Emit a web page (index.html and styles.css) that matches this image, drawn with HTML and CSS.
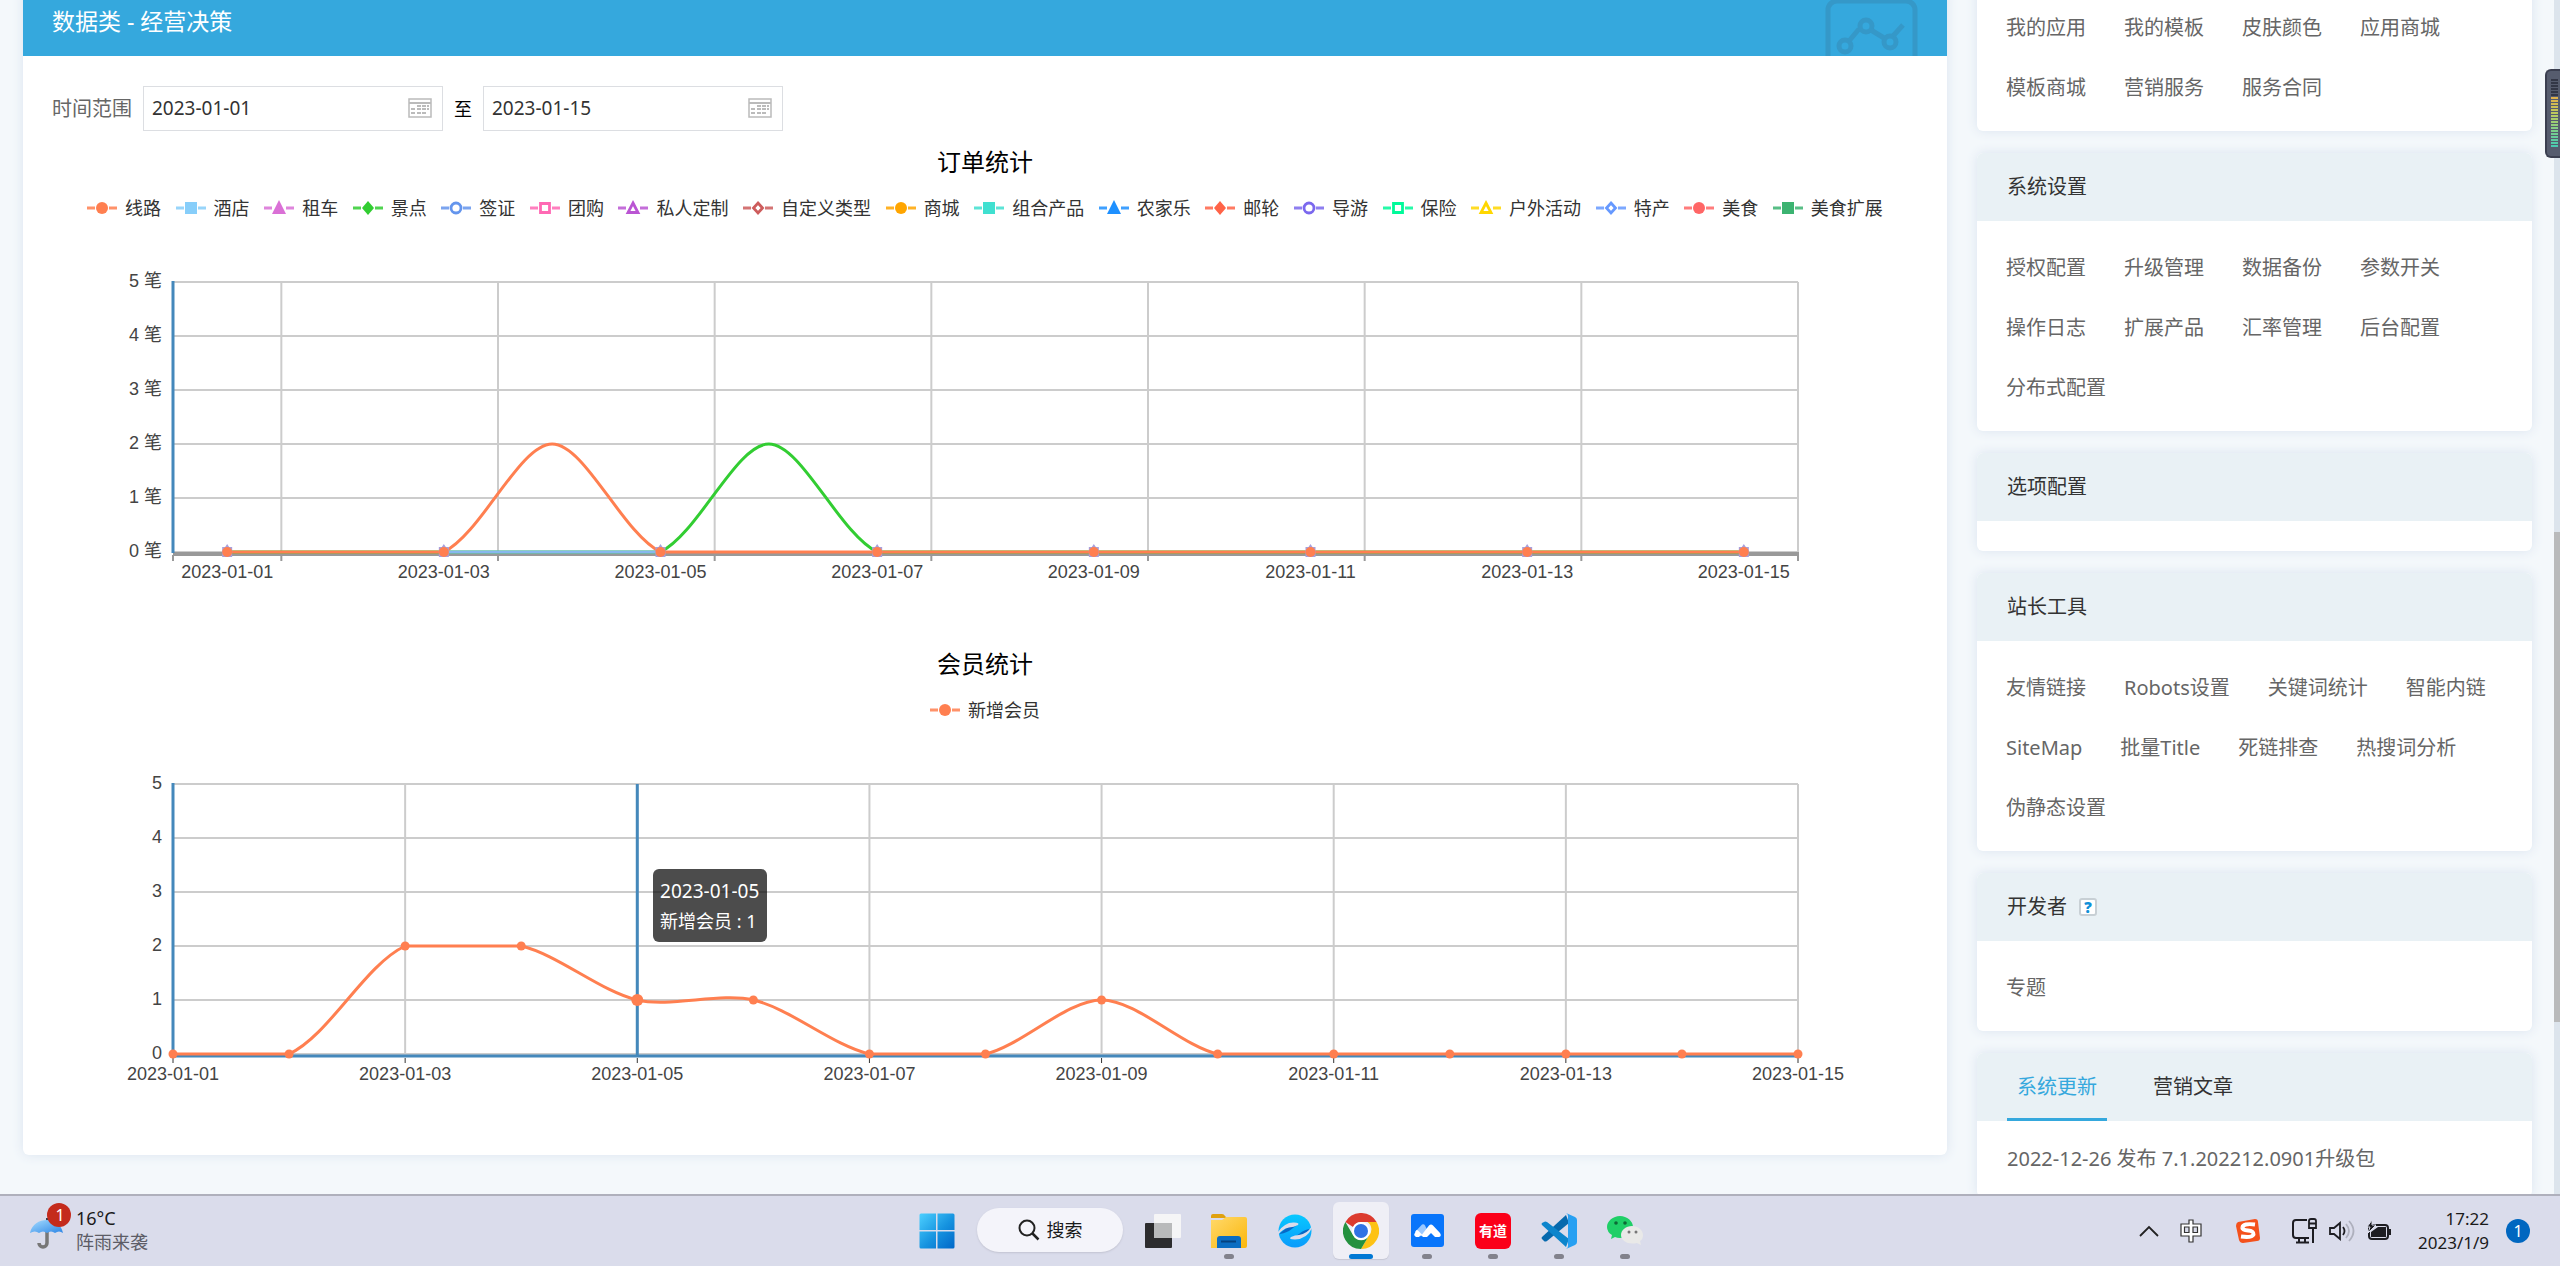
FILE: index.html
```html
<!DOCTYPE html>
<html lang="zh-CN">
<head>
<meta charset="utf-8">
<title>数据类 - 经营决策</title>
<link rel="stylesheet" href="styles.css">
</head>
<body>
<div class="viewport">
  <div class="page">
    <main class="panel">
      <header class="panel-head">
        <h1>数据类 - 经营决策</h1>
        <svg class="head-icon" width="94" height="68" viewBox="0 0 94 68" fill="none" stroke="#3598c8" stroke-width="5">
          <rect x="3" y="13" width="87" height="75" rx="9"/>
          <circle cx="20" cy="58" r="6"/><circle cx="41" cy="38" r="6"/><circle cx="65" cy="54" r="6"/>
          <path d="M24 53 34 41M46 42 59 50M68 48 78 37"/>
        </svg>
      </header>
      <form class="range">
        <label for="from">时间范围</label>
        <span class="date"><input id="from" type="text" value="2023-01-01"><svg width="24" height="20" viewBox="0 0 24 20"><use href="#cal"/></svg></span>
        <label class="to" for="until">至</label>
        <span class="date"><input id="until" type="text" value="2023-01-15"><svg width="24" height="20" viewBox="0 0 24 20"><use href="#cal"/></svg></span>
      </form>
      <figure class="chart" id="orders">
        <figcaption>订单统计</figcaption>
        <ul class="legend wide"></ul>
        <div class="plot"></div>
      </figure>
      <figure class="chart" id="members">
        <figcaption>会员统计</figcaption>
        <ul class="legend"></ul>
        <div class="plot"></div>
      </figure>
    </main>

    <aside class="side">
      <section class="card">
        <nav class="links"><a href="#">我的应用</a><a href="#">我的模板</a><a href="#">皮肤颜色</a><a href="#">应用商城</a><a href="#">模板商城</a><a href="#">营销服务</a><a href="#">服务合同</a></nav>
      </section>
      <section class="card">
        <h2>系统设置</h2>
        <nav class="links"><a href="#">授权配置</a><a href="#">升级管理</a><a href="#">数据备份</a><a href="#">参数开关</a><a href="#">操作日志</a><a href="#">扩展产品</a><a href="#">汇率管理</a><a href="#">后台配置</a><a href="#">分布式配置</a></nav>
      </section>
      <section class="card">
        <h2>选项配置</h2>
        <nav class="links"></nav>
      </section>
      <section class="card">
        <h2>站长工具</h2>
        <nav class="links"><a href="#">友情链接</a><a href="#">Robots设置</a><a href="#">关键词统计</a><a href="#">智能内链</a><a href="#">SiteMap</a><a href="#">批量Title</a><a href="#">死链排查</a><a href="#">热搜词分析</a><a href="#">伪静态设置</a></nav>
      </section>
      <section class="card">
        <h2>开发者 <button class="help" type="button">?</button></h2>
        <nav class="links"><a href="#">专题</a></nav>
      </section>
      <section class="card">
        <div class="tabs"><button type="button" class="on">系统更新</button><button type="button">营销文章</button></div>
        <nav class="links news"><a href="#">2022-12-26 发布 7.1.202212.0901升级包</a></nav>
      </section>
    </aside>
  </div>
  <div class="scroll"><div class="thumb"></div></div>
  <div class="meter"><i class="dim"></i><i class="lit"></i></div>
</div>

<footer class="taskbar">
  <div class="weather">
    <svg width="44" height="50" viewBox="0 0 44 50">
      <defs><linearGradient id="um" x2="1" y2="1"><stop stop-color="#a5dcff"/><stop offset="1" stop-color="#2d86e6"/></linearGradient></defs>
      <path d="M18 28V40a4 4 0 0 1-8 0" fill="none" stroke="#777" stroke-width="3.5"/>
      <path d="M18 15v3" stroke="#345" stroke-width="2"/>
      <path d="M1 30C3 21 10 17 18 17s14 4 16 13q-4-3-8 0-4-3-8 0-4-3-8 0-4-3-9 0Z" fill="url(#um)"/>
      <circle cx="30" cy="12" r="12" fill="#c42b1c"/>
      <text x="31" y="18" text-anchor="middle" class="badge-num">1</text>
    </svg>
    <div><b>16°C</b><span>阵雨来袭</span></div>
  </div>
  <div class="apps">
    <button type="button" class="app" aria-label="开始"><svg width="36" height="36" viewBox="0 0 36 36">
      <defs><linearGradient id="wg" x2="1" y2="1"><stop stop-color="#4cd0ff"/><stop offset=".55" stop-color="#1592df"/><stop offset="1" stop-color="#0067c8"/></linearGradient></defs>
      <path fill="url(#wg)" d="M2 .5h15v16.500H.5V2A1.500 1.500 0 0 1 2 .5ZM18.500.5H34A1.500 1.500 0 0 1 35.500 2v15h-17ZM.5 18.500H17v17H2A1.500 1.500 0 0 1 .5 34ZM18.500 18.500h17V34a1.500 1.500 0 0 1-1.500 1.500H18.500Z"/></svg></button>
    <button type="button" class="search"><svg width="22" height="22" viewBox="0 0 22 22" fill="none" stroke="#222" stroke-width="2"><circle cx="9" cy="9" r="7.500"/><path d="m14.500 14.500 6 6" stroke-width="2.500"/></svg>搜索</button>
    <button type="button" class="app" aria-label="任务视图"><svg width="36" height="34" viewBox="0 0 36 34"><rect y="9" width="27" height="25" rx="1" fill="#2c2c2e"/><rect x="9" width="27" height="24" rx="1" fill="#f5f5f6"/><path fill="#b9babb" d="M9 9h18v15H9z"/></svg></button>
    <button type="button" class="app run" aria-label="文件资源管理器"><svg width="36" height="34" viewBox="0 0 36 34"><defs><linearGradient id="fg" x2="1" y2="1"><stop stop-color="#ffd96b"/><stop offset="1" stop-color="#fbb70c"/></linearGradient></defs><path fill="#e0a10e" d="M0 2a2 2 0 0 1 2-2h9q2 0 3 2l2 2H0Z"/><path d="M0 6h11l4-3h19a2 2 0 0 1 2 2v27a2 2 0 0 1-2 2H0Z" fill="url(#fg)"/><path fill="#0b6dc2" d="M6 34V25q0-3 3-3h18q3 0 3 3v9Z"/><path stroke="#05427f" stroke-width="2" d="M10 27.500h15"/></svg></button>
    <button type="button" class="app" aria-label="浏览器"><svg width="34" height="34" viewBox="0 0 34 34"><defs><linearGradient id="eg" x2="0" y2="1"><stop stop-color="#08c8ff"/><stop offset="1" stop-color="#0a9bfb"/></linearGradient></defs><circle cx="17" cy="17" r="16.500" fill="url(#eg)"/><path fill="#0868c6" d="M1 20q4 0 10-3l8-6q-9-1-13 5ZM33 15q-6 0-12 5l-6 4q9 0 14-4Z"/><path fill="#dadceb" d="M0 18Q7 8 16 8.500q6 0 4 2.500-4 2-9 2.500Q4 15 0 21ZM34 14q-5 11-17 11.500-7 0-4-2.500 4-2 8-2 8-1 13-9Z"/></svg></button>
    <button type="button" class="app run active" aria-label="Chrome"><svg width="36" height="36" viewBox="0 0 36 36"><path fill="#dc3b2f" d="M2.400 9a18 18 0 0 1 31.200 0H18a9 9 0 0 0-8 5Z"/><path fill="#fdc215" d="M33.600 9A18 18 0 0 1 18 36l8-13.500A9 9 0 0 0 24.500 9Z"/><path fill="#24913f" d="M2.400 9A18 18 0 0 0 18 36l8-13.500a9 9 0 0 1-15.800 0Z"/><circle cx="18" cy="18" r="9" fill="#fff"/><circle cx="18" cy="18" r="7" fill="#2f72e4"/></svg></button>
    <button type="button" class="app run" aria-label="会议"><svg width="33" height="33" viewBox="0 0 33 33"><rect width="33" height="33" rx="3" fill="#0875fb"/><path fill="#9cc9ff" d="M4 18 11 10.500q2-1 3 1l2 4-6 7Z"/><path fill="#fff" d="M5 16.500q1-1 2 0l4 4 7-9q2-2 4 0l7 7.500q2 3-1 4h-4l-4-4-4 4h-4l-2-2-2 2H5q-3-2-1-4Z"/></svg></button>
    <button type="button" class="app run" aria-label="有道"><span class="youdao">有道</span></button>
    <button type="button" class="app run" aria-label="VS Code"><svg width="36" height="36" viewBox="0 0 36 36"><path fill="#0669ad" d="m1 24 24-22 3 8L6 28q-2 1-3 0l-2-2q-1-1 0-2Z"/><path fill="#0c85cc" d="m1 12 24 22 3-8L6 9q-2-1-3 0l-2 1q-1 1 0 2Z"/><path fill="#27a0f2" d="m25 0 9 4q2 1 2 3v22q0 2-2 3l-9 4q2-1 2-3V3q0-2-2-3Z"/></svg></button>
    <button type="button" class="app run" aria-label="微信"><svg width="36" height="32" viewBox="0 0 36 32"><path fill="#1fcf67" d="M13 1c7 0 13 5 13 11s-6 11-13 11q-3 0-5-1l-4 2 1-4Q0 17 0 12C0 6 6 1 13 1Z"/><circle cx="9" cy="8" r="1.800" fill="#0c6a36"/><circle cx="18" cy="8" r="1.800" fill="#0c6a36"/><path fill="#e9e9e8" d="M25 11c6 0 11 4 11 9 0 3-1 5-3 6l1 4-4-2c-9 2-16-2-16-8 0-5 5-9 11-9Z"/><circle cx="22" cy="17" r="1.500" fill="#777"/><circle cx="29" cy="17" r="1.500" fill="#777"/></svg></button>
  </div>
  <div class="tray">
    <svg width="20" height="12" viewBox="0 0 20 12" fill="none" stroke="#222" stroke-width="1.800"><path d="m1 11 9-9 9 9"/></svg>
    <svg class="ime" width="24" height="26" viewBox="0 0 24 26" fill="#fff" stroke="#333" stroke-width="1.200"><path d="M10 2h4v4h8v12h-8v6h-4v-6H2V6h8Z"/><path fill="#dadceb" d="M5.500 9H10v5.500H5.500ZM14 9h4.500v5.500H14Z"/></svg>
    <svg class="sogou" width="26" height="26" viewBox="0 0 26 26"><path fill="#f4511c" d="m3 4 17-3q3 0 3 3l2 16q0 3-3 3L8 25q-3 0-4-3L1 8q0-3 2-4Z"/><path d="M20 6.500Q8 5 7.500 9.500 7 12 13 12.500t5.500 4Q17 20 6 18.500" fill="none" stroke="#fff" stroke-width="4"/></svg>
    <svg class="net" width="26" height="26" viewBox="0 0 26 26" fill="none" stroke="#1d1d22" stroke-width="2"><path d="M16 2H5Q2 2 2 5v12q0 3 3 3h13M8 20v4M14 20v4M5 24.500h13M22 10v15"/><path d="M18 3q0-2 2-2h3q2 0 2 2v7h-7ZM18 5.500h7" stroke-width="1.800"/></svg>
    <svg width="26" height="22" viewBox="0 0 26 22" fill="none" stroke="#1d1d22" stroke-width="1.800"><path d="M1 8v6h4l6 5V3L5 8ZM14 7q3 4 0 8"/><path stroke="#aeb0bd" d="M17 4q6 7 0 14M20 1q9 10 0 20"/></svg>
    <svg width="25" height="22" viewBox="0 0 25 22"><rect x="2" y="5" width="19" height="14" rx="3" fill="none" stroke="#1d1d22" stroke-width="2"/><path d="M4 17V12l7-5h8v10ZM22 9h2v6h-2Z" fill="#1d1d22"/><path d="M5 0 0 7h3L1 13l8-8H5Z" fill="#1d1d22" stroke="#dadceb"/></svg>
    <div class="clock"><time>17:22</time><time>2023/1/9</time></div>
    <span class="count">1</span>
  </div>
</footer>

<svg class="defs" width="0" height="0">
  <symbol id="cal" viewBox="0 0 24 20"><path fill="none" stroke="#bbb" stroke-width="1.500" d="M1 1h22v18H1z"/><path fill="#bbb" d="M1 4h22v2H1zM9 7h4v2H9zM14 7h4v2h-4zM19 7h2v2h-2zM3 10h4v2H3zM9 10h4v2H9zM14 10h4v2h-4zM19 10h2v2h-2zM3 14h4v2H3zM9 14h4v2H9zM14 14h4v2h-4z"/></symbol>
</svg>
<script src="charts.js"></script>
</body>
</html>
```

FILE: styles.css
```css
* { box-sizing: border-box; }
body {
  margin: 0;
  height: 100vh;
  display: flex;
  flex-direction: column;
  overflow: hidden;
  background: #f4f8fb;
  font: 20px/30px "Noto Sans", "Noto Sans CJK SC", sans-serif;
  color: #333;
}
a { color: inherit; text-decoration: none; }
button, input { font: inherit; color: inherit; border: 0; background: none; padding: 0; }
h1, h2, figure, ul { margin: 0; padding: 0; font-weight: 400; }
.defs { position: absolute; }

.viewport { position: relative; flex: 1; min-height: 0; overflow: hidden; }
/* the page is scrolled a little past its top edge */
.page {
  display: flex;
  align-items: flex-start;
  gap: 30px;
  margin-top: -19px;
  padding: 0 28px 0 23px;
}
.panel {
  flex: 1;
  min-width: 0;
  margin-top: 7px;
  padding-bottom: 7px;
  background: #fff;
  border-radius: 6px;
  box-shadow: 0 0 12px #dbe4f0;
}
.panel-head {
  display: flex;
  justify-content: space-between;
  height: 68px;
  padding: 0 28px 0 29px;
  background: #35a8dd;
  color: #fff;
}
h1 { font-size: 23px; line-height: 66px; }
.range {
  display: flex;
  align-items: center;
  gap: 11px;
  padding: 30px 29px 13px;
  color: #666;
}
.range .to { font-size: 18px; color: #000; }
.date { position: relative; width: 300px; }
.date input {
  display: block;
  width: 100%;
  height: 45px;
  padding: 0 8px 2px;
  border: 1px solid #dcdee2;
  font-size: 19px;
  color: #333;
}
.date svg { position: absolute; right: 11px; top: 12px; }

figcaption { font-size: 24px; line-height: 35px; text-align: center; color: #000; }
.legend {
  display: flex;
  justify-content: center;
  height: 77px;
  padding-top: 14px;
  list-style: none;
  font-size: 18px;
}
.legend.wide { justify-content: space-between; padding-left: 64px; padding-right: 64px; }
.legend li { display: flex; align-items: flex-start; gap: 8px; white-space: nowrap; }
.legend svg { margin-top: 5px; }
.plot { position: relative; }
.plot > svg { display: block; width: 100%; height: auto; }
.plot text { font: 18px "Liberation Sans", "Noto Sans CJK SC", sans-serif; fill: #444; }
.tip {
  position: absolute;
  left: 32.750%;
  top: 28.500%;
  padding: 7px 8px 6px 7px;
  border-radius: 6px;
  background: rgba(0, 0, 0, .7);
  color: #fff;
  font-size: 18px;
}
.tip b { display: block; font-weight: 400; font-size: 19px; }

.side { width: 555px; display: flex; flex-direction: column; gap: 22px; }
.card { background: #fff; border-radius: 6px; box-shadow: 0 0 12px #dbe4f0; }
.card h2, .tabs { height: 68px; padding: 0 30px; background: #e9f1f5; border-radius: 6px 6px 0 0; }
.card h2 { display: flex; align-items: center; gap: 12px; font-size: 20px; }
.links {
  display: flex;
  flex-wrap: wrap;
  column-gap: 38px;
  padding: 17px 29px 13px;
  line-height: 60px;
  color: #666;
}
.news { padding: 8px 30px; }
.help {
  width: 18px;
  height: 18px;
  border: 2px solid #c8d0d5;
  border-radius: 3px;
  background: #fff;
  color: #1090d8;
  font-size: 15px;
  font-weight: 900;
  line-height: 14px;
}
.tabs { display: flex; gap: 36px; }
.tabs button { padding: 3px 10px 0; border-bottom: 3px solid transparent; }
.tabs .on { color: #35a8dd; border-color: #35a8dd; }

.scroll { position: absolute; right: 0; top: 0; bottom: 0; width: 6px; background: #dce4ec; }
.thumb { height: 41%; margin-top: 532px; background: #b9babb; }
.meter {
  position: absolute;
  right: 0;
  top: 69px;
  width: 15px;
  height: 89px;
  padding: 10px 2px 0 4px;
  border: 2px solid #3b3f50;
  border-right: 0;
  border-radius: 6px 0 0 6px;
  background: #565c6e;
}
.meter i { display: block; }
.meter .dim { height: 18px; margin-top: -2px; background: repeating-linear-gradient(#333747 0 2px, #565c6e 2px 3px); }
.meter .lit {
  height: 51px;
  background: repeating-linear-gradient(transparent 0 2px, #565c6e 2px 3px), linear-gradient(#e2b04a, #b9cc60 35%, #7ed08a 65%, #44c9b4);
}

.taskbar {
  display: grid;
  grid-template-columns: 1fr auto 1fr;
  height: 72px;
  border-top: 2px solid #afb0bc;
  background: #dadceb;
}
.weather { display: flex; gap: 3px; padding: 7px 0 0 29px; font-size: 18px; line-height: 24px; }
.weather b { display: block; font-weight: 400; color: #1a1a1a; }
.weather span { color: #5c5c66; }
.weather div { padding-top: 3px; }
.badge-num { font-size: 16px; fill: #fff; }
.apps { display: flex; gap: 10px; padding: 6px 0 0 2px; }
.app {
  position: relative;
  display: flex;
  align-items: center;
  justify-content: center;
  width: 56px;
  height: 57px;
  border-radius: 6px;
}
.app.active { background: #efeff6; box-shadow: 0 1px 1px #c6c7d4; }
.run::after {
  content: "";
  position: absolute;
  left: 23px;
  bottom: 0;
  width: 10px;
  height: 5px;
  border-radius: 3px;
  background: #82828c;
}
.run.active::after { left: 16px; width: 24px; background: #0078d4; }
.search {
  display: flex;
  align-items: center;
  justify-content: center;
  gap: 7px;
  width: 146px;
  height: 44px;
  margin: 6px 2px 0;
  border-radius: 22px;
  background: #f4f4fa;
  box-shadow: 0 1px 2px #c2c3d1;
  font-size: 18px;
  color: #1a1a1a;
}
.youdao {
  width: 36px;
  height: 36px;
  border-radius: 6px;
  background: #fb0019;
  color: #fff;
  font-size: 14px;
  font-weight: 700;
  line-height: 36px;
}
.tray {
  display: flex;
  align-items: center;
  justify-content: flex-end;
  gap: 12px;
  padding-right: 30px;
  font-size: 17px;
  line-height: 24px;
  color: #1a1a1a;
}
.ime { margin-left: 8px; }
.sogou { margin-left: 20px; }
.net { margin-left: 18px; }
.clock { width: 85px; text-align: right; }
.clock time { display: block; }
.count {
  width: 24px;
  height: 24px;
  margin-left: 5px;
  border-radius: 50%;
  background: #0067c0;
  color: #fff;
  font-size: 16px;
  text-align: center;
}
```

FILE: charts.js
```js
const LEFT = 150, RIGHT = 1775, TOP = 26, STEP = 54, BASE = TOP + 5 * STEP;
const CORAL = '#ff7f50';
const SMOOTH = 0.3;
const day = i => '2023-01-' + String(i + 1).padStart(2, '0');

// Legend marks: a short line with a gap around the symbol
const shapes = {
  circle: '<circle cx="15" cy="10" r="6"/>',
  square: '<path d="M9 4h12v12H9z"/>',
  triangle: '<path d="M15 2l7 14H8z"/>',
  diamond: '<path d="M15 3l6 7-6 7-6-7z"/>',
  ocircle: '<circle cx="15" cy="10" r="5"/>',
  osquare: '<path d="M10.500 5.500h9v9h-9z"/>',
  otriangle: '<path d="M15 5l5 9.500H10z"/>',
  odiamond: '<path d="M15 5l4.500 5-4.500 5-4.500-5z"/>'
};
function legend(id, items) {
  document.querySelector('#' + id + ' .legend').innerHTML = items.map(([name, color, shape]) => {
    const paint = shape[0] === 'o' ? `fill="#fff" stroke="${color}" stroke-width="2.800"` : `fill="${color}"`;
    return `<li><svg width="30" height="20"><path d="M0 10h8M22 10h8" stroke="${color}" stroke-width="3" opacity=".85"/><g ${paint}>${shapes[shape]}</g></svg>${name}</li>`;
  }).join('');
}
legend('orders', [
  ['线路', CORAL, 'circle'], ['酒店', '#87cefa', 'square'], ['租车', '#da70d6', 'triangle'],
  ['景点', '#32cd32', 'diamond'], ['签证', '#6495ed', 'ocircle'], ['团购', '#ff69b4', 'osquare'],
  ['私人定制', '#ba55d3', 'otriangle'], ['自定义类型', '#cd5c5c', 'odiamond'], ['商城', '#ffa500', 'circle'],
  ['组合产品', '#40e0d0', 'square'], ['农家乐', '#1e90ff', 'triangle'], ['邮轮', '#ff6347', 'diamond'],
  ['导游', '#7b68ee', 'ocircle'], ['保险', '#00fa9a', 'osquare'], ['户外活动', '#ffd700', 'otriangle'],
  ['特产', '#6699ff', 'odiamond'], ['美食', '#ff6666', 'circle'], ['美食扩展', '#3cb371', 'square']
]);
legend('members', [['新增会员', CORAL, 'circle']]);

const line = (x1, y1, x2, y2, color, width) =>
  `<path d="M${x1} ${y1}L${x2} ${y2}" stroke="${color}" stroke-width="${width}"/>`;
const label = (x, y, s, anchor) => `<text x="${x}" y="${y}" text-anchor="${anchor}">${s}</text>`;

// Smooth curve whose control points stay inside the data's own range
function curve(pts, color) {
  const ys = pts.map(p => p[1]), lo = Math.min(...ys), hi = Math.max(...ys);
  const clip = y => Math.max(lo, Math.min(hi, y));
  const cps = pts.map((p, i) => {
    const a = pts[i - 1], b = pts[i + 1];
    if (!a || !b) return [p, p];
    const vx = (b[0] - a[0]) * SMOOTH, vy = (b[1] - a[1]) * SMOOTH;
    const d0 = Math.hypot(p[0] - a[0], p[1] - a[1]), d1 = Math.hypot(b[0] - p[0], b[1] - p[1]);
    const r0 = d0 / (d0 + d1), r1 = d1 / (d0 + d1);
    return [[p[0] - vx * r0, clip(p[1] - vy * r0)], [p[0] + vx * r1, clip(p[1] + vy * r1)]];
  });
  let d = 'M' + pts[0];
  for (let i = 1; i < pts.length; i++) d += 'C' + [cps[i - 1][1], cps[i][0], pts[i]].join(' ');
  return `<path d="${d}" fill="none" stroke="${color}" stroke-width="3"/>`;
}
function grid(xs, unit) {
  let s = '';
  for (let v = 0; v <= 5; v++) {
    const y = BASE - v * STEP;
    s += line(LEFT, y, RIGHT, y, '#ccc', 2) + label(LEFT - 11, y + 5, v + unit, 'end');
  }
  xs.forEach(x => { s += line(x, TOP, x, BASE, '#ccc', 2); });
  return s;
}
function draw(id, body, extra) {
  document.querySelector('#' + id + ' .plot').innerHTML =
    `<svg viewBox="0 0 1924 390">${body}</svg>${extra || ''}`;
}

// Orders: categories sit in the middle of their bands
(function () {
  const band = (RIGHT - LEFT) / 15;
  const ticks = [1, 3, 5, 7, 9, 11, 13, 15].map(i => LEFT + band * i);
  const at = values => values.map((v, i) => [LEFT + band * (i + .5), BASE - v * STEP]);
  const series = peak => at(Array.from({ length: 15 }, (_, i) => i === peak ? 2 : 0));
  let s = grid(ticks, ' 笔');
  s += line(LEFT, BASE + 2, RIGHT + 1, BASE + 2, '#999', 4);
  [LEFT, ...ticks].forEach(x => { s += line(x, BASE + 3, x, BASE + 9, '#999', 2); });
  s += line(LEFT, TOP - 1, LEFT, BASE + 1, '#48b', 3);
  s += curve(series(5), '#32cd32');
  s += line(LEFT + band * 2.5, BASE, LEFT + band * 4.5, BASE, '#87b8ee', 3);
  s += curve(series(3), CORAL);
  for (let i = 0; i < 15; i += 2) {
    const x = LEFT + band * (i + .5);
    s += `<path d="M${x - 5} ${BASE - 5}h3l2-3 2 3h3v10h-10z" fill="#a8a0dc"/><circle cx="${x}" cy="${BASE}" r="5" fill="${CORAL}"/>`;
    s += label(x, BASE + 26, day(i), 'middle');
  }
  draw('orders', s);
})();

// Members: points sit on the axis ticks
(function () {
  const values = [0, 0, 2, 2, 1, 1, 0, 0, 1, 0, 0, 0, 0, 0, 0];
  const pitch = (RIGHT - LEFT) / 14;
  const pts = values.map((v, i) => [LEFT + pitch * i, BASE - v * STEP]);
  const even = pts.filter((_, i) => i % 2 === 0);
  let s = grid(even.slice(1).map(p => p[0]), '');
  s += line(LEFT, BASE + 2, RIGHT + 1, BASE + 2, '#48b', 3);
  even.forEach((p, i) => {
    s += line(p[0], BASE + 4, p[0], BASE + 9, '#333', 1) + label(p[0], BASE + 26, day(i * 2), 'middle');
  });
  s += line(LEFT, TOP - 1, LEFT, BASE + 1, '#48b', 3);
  s += line(pts[4][0], TOP, pts[4][0], BASE + 1, '#48b', 3);
  s += curve(pts, CORAL);
  pts.forEach((p, i) => { s += `<circle cx="${p[0]}" cy="${p[1]}" r="${i === 4 ? 6 : 4.5}" fill="${CORAL}"/>`; });
  draw('members', s, '<div class="tip"><b>2023-01-05</b>新增会员 : 1</div>');
})();
```
